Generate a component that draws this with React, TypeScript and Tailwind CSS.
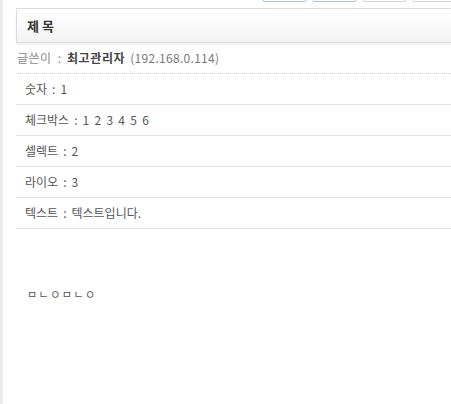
import React from 'react';

const rows = [
  { label: '숫자', value: '1' },
  { label: '체크박스', value: '1 2 3 4 5 6' },
  { label: '셀렉트', value: '2' },
  { label: '라이오', value: '3' },
  { label: '텍스트', value: '텍스트입니다.' },
];

export default function App() {
  return (
    <div
      className="flex w-[451px] h-[404px] overflow-hidden bg-white text-[12px] text-[#555]"
      style={{ fontFamily: '"Noto Sans CJK KR", "Noto Sans", sans-serif' }}
    >
      <div className="w-[3px] shrink-0 bg-[#ececec]" />
      <div className="flex-1 flex flex-col pl-[13px] relative">
        {/* top buttons, mostly scrolled out of view */}
        <div className="flex h-[2px] items-end gap-[5px] pl-[246px] overflow-hidden">
          <div className="w-[45px] h-[10px] shrink-0 rounded-[3px] border border-[#a9c1e3]" />
          <div className="w-[45px] h-[10px] shrink-0 rounded-[3px] border border-[#a9c1e3]" />
          <div className="w-[45px] h-[10px] shrink-0 rounded-[3px] border border-[#d5d5d5]" />
          <div className="w-[45px] h-[10px] shrink-0 rounded-[3px] border border-[#d5d5d5]" />
        </div>
        <div className="mt-[6px] h-[35px] -mr-[4px] flex items-center pl-[10px] border border-[#dcdcdc] bg-gradient-to-b from-white to-[#f3f3f3] shadow-[0_2px_2px_rgba(0,0,0,0.06)]">
          <h1 className="font-bold text-[13px] text-[#333] tracking-[3px]">제목</h1>
        </div>
        <div className="h-[31px] flex items-center pl-[1px] pb-[1px] border-b border-dotted border-[#cfcfcf] text-[#888]">
          <span className="tracking-[0.5px]">글쓴이</span>
          <span className="mx-[6px]">:</span>
          <strong className="font-bold text-[#444] tracking-[0.6px]">최고관리자</strong>
          <span className="ml-[5px] text-[#777] tracking-[0.3px]">(192.168.0.114)</span>
        </div>
        {rows.map((r) => (
          <div
            key={r.label}
            className="h-[31px] flex items-center pl-[9px] border-b border-[#e4e4e4]"
          >
            <span>{r.label}</span>
            <span className="mx-[5px]">:</span>
            <span className={r.value.includes(' ') ? 'tracking-[1.3px]' : ''}>{r.value}</span>
          </div>
        ))}
        <div className="pl-[11px] pt-[57px] text-[11px] tracking-[1.5px] text-[#555]">ㅁㄴㅇㅁㄴㅇ</div>
      </div>
    </div>
  );
}
